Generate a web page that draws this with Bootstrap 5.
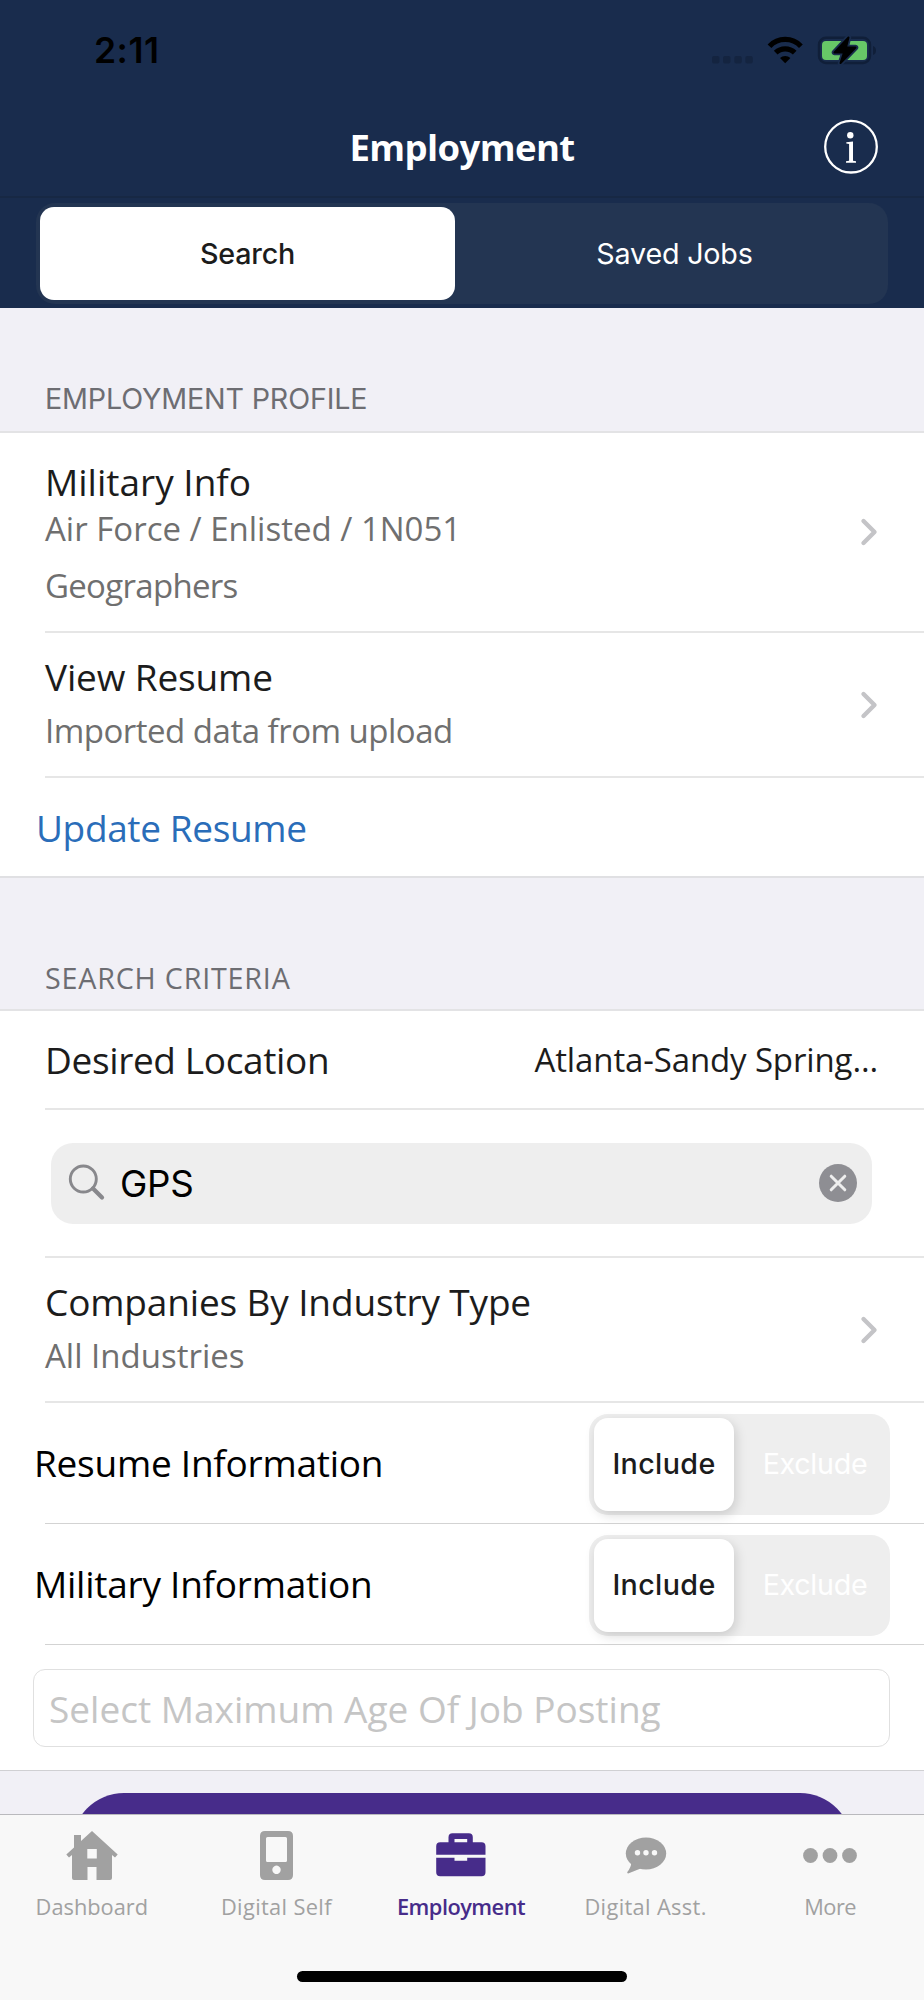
<!DOCTYPE html>
<html lang="en">
<head>
<meta charset="utf-8">
<meta name="viewport" content="width=device-width, initial-scale=1">
<title>Employment</title>
<link href="https://cdn.jsdelivr.net/npm/bootstrap@5.3.0/dist/css/bootstrap.min.css" rel="stylesheet">
<script src="https://cdn.jsdelivr.net/npm/bootstrap@5.3.0/dist/js/bootstrap.bundle.min.js" defer></script>
<style>
  body{width:924px;height:2000px;overflow:hidden;background:#f1f0f6;color:#1c1c1c;font-family:"Open Sans",sans-serif;font-size:37px;line-height:44px;white-space:nowrap}
  .sys{font-family:Inter,"Liberation Sans",sans-serif}
  .top-area{background:#192c4d;height:308px}
  .status-bar{height:100px;padding:28px 47px 0 94px;color:#000}
  .clock{font-size:35.5px;font-weight:600;letter-spacing:.5px;padding-top:1px}
  .title-bar{height:98px;border-bottom:2px solid #172844;color:#fff}
  .title-bar h1{font-size:36.5px;font-weight:700;line-height:46px;letter-spacing:-.6px}
  .info-icon{right:46px;top:19px}
  .seg-top{height:101px;margin:5px 36px 0;padding:4px;border-radius:19px;background:#233552;color:#fff;font-size:28.7px;letter-spacing:-.2px}
  .seg-top .seg-on{width:415px}
  .seg-off{padding-left:10px}
  .seg-on{background:#fff;color:#1c1c1c;border-radius:14px;font-weight:500}
  .section-head{font-size:28.7px;line-height:34px;color:#6d6d72;padding-left:45px;border-bottom:2px solid #e3e3e5}
  .head-profile{height:125px;padding-top:74px;letter-spacing:-.18px}
  .head-search{height:133px;padding-top:83px;letter-spacing:.8px}
  .item{margin-left:45px;border-bottom:2px solid #e6e6e6;padding-right:46px}
  .item.thin{border-bottom:1px solid #d3d3d3}
  .item.last{margin-left:0;border-color:#e0e0e3}
  .item.thin.last{border-color:#d0d0d3}
  .sub{font-size:33px;color:#6f6f6f}
  .chevron{align-self:center}
  .h-military{height:200px;padding-top:27px}
  .h-military .chevron{margin-top:-27px}
  .h-double{height:145px;padding-top:22px}
  .h-double .chevron{margin-top:-22px}
  .h-double .sub{margin-top:10px}
  .h-location{height:99px;letter-spacing:-.36px}
  .h-location .place{font-size:33px;letter-spacing:-.13px;padding-top:1px}
  .h-search{height:148px}
  .h-flag{height:121px;padding-top:2px}
  .h-age{height:126px;padding:24px 0 0 33px}
  .h-update{height:100px;padding-left:36px;padding-top:28px;color:#2a6db9;letter-spacing:-.36px}
  .mt-force{margin-top:3px;letter-spacing:0}
  .mt-geo{margin-top:13px;letter-spacing:-.7px}
  .tight{letter-spacing:-.5px}
  .snug{letter-spacing:-.15px}
  .searchbox{margin-left:6px;width:821px;height:81px;border-radius:22px;background:#eee;padding:0 14px 0 16px;color:#000;font-size:36.7px;letter-spacing:-.3px}
  .searchbox span{margin-left:15px;padding-top:1px}
  .seg{width:301px;height:101px;border-radius:19px;background:#eee;padding:4px 4px 4px 5px;font-size:28.7px;line-height:46px;color:#fff;margin-right:-12px;letter-spacing:-.3px}
  .seg .seg-on{width:140px;height:93px;box-shadow:2px 4px 12px rgba(0,0,0,.15);letter-spacing:.36px}
  .flag-label{color:#000;margin:-2px 0 0 -11px;letter-spacing:-.25px}
  .age{width:857px;height:78px;border:1.5px solid #e0e0e0;border-radius:12px;color:#c5c5c5;padding:1px 0 0 15px}
  .go{height:104px;margin:22px 72px 0;border-radius:52px;background:#472c8a}
  .tabs{height:186px;background:#f8f8f8;border-top:1px solid #b9b9bd;color:#a1a1a1;font-size:21.8px;font-weight:500;line-height:28px}
  .tab-strip{margin-left:-2px}
  .tab{width:184.6px;padding-top:10px}
  .tab svg{height:60px;width:60px;margin-bottom:8px}
  .tab.on{color:#472c8a;font-weight:600;letter-spacing:-.53px}
  .wide{letter-spacing:.35px}
  .home-bar{width:330px;height:11px;border-radius:6px;background:#000;margin-top:50px}
</style>
</head>
<body class="d-flex flex-column">
<header class="top-area flex-shrink-0">
  <div class="status-bar d-flex justify-content-between">
    <span class="clock sys">2:11</span>
    <svg width="166" height="44" viewBox="711 28 166 44">
      <g fill="#142440"><rect x="712" y="56" width="7.500" height="7.500" rx="2"/><rect x="723" y="56" width="7.500" height="7.500" rx="2"/><rect x="734.300" y="56" width="7.500" height="7.500" rx="2"/><rect x="745.300" y="56" width="7.500" height="7.500" rx="2"/></g>
      <g fill="none" stroke="#000" stroke-width="5.200"><path d="M769.500 46.200a21.500 21.500 0 0 1 31.400 0"/><path d="M775.700 52.700a13.500 13.500 0 0 1 19 0"/></g>
      <path d="M785.200 63.200l-5.200-5.200a7.600 7.600 0 0 1 10.400 0z"/>
      <rect x="819" y="37.800" width="51" height="25.200" rx="7" fill="none" stroke="#101f39" stroke-width="2.400"/>
      <path d="M873 46q3 1 3 4.500t-3 4.500z" fill="#101f39"/>
      <rect x="822" y="41" width="45" height="19" rx="4" fill="#67c767"/>
      <path d="M848.500 37.500l-14 15h9.500l-3.500 10.500 15-15.500h-9.500z" stroke="#192c4d" stroke-width="5.500" stroke-linejoin="round"/>
      <path d="M848.500 37.500l-14 15h9.500l-3.500 10.500 15-15.500h-9.500z" stroke="#000" stroke-width="2" stroke-linejoin="round"/>
    </svg>
  </div>
  <div class="title-bar position-relative d-flex justify-content-center">
    <h1 class="m-0 pt-4">Employment</h1>
    <svg class="info-icon position-absolute" width="54" height="56" viewBox="824 119 54 56"><circle cx="851" cy="146.700" r="25.800" fill="none" stroke="#fff" stroke-width="2.300"/><circle cx="850.300" cy="135.300" r="3.200" fill="#fff"/><path d="M846.300 142.200l6.700-.8v19.300l3 .6v1.500h-10v-1.500l3.100-.6v-16.700l-2.800-.5z" fill="#fff"/></svg>
  </div>
  <div class="seg-top sys d-flex">
    <div class="seg-on d-flex align-items-center justify-content-center">Search</div>
    <div class="seg-off flex-fill d-flex align-items-center justify-content-center">Saved Jobs</div>
  </div>
</header>

<main class="flex-fill overflow-hidden">
  <div class="section-head head-profile sys">EMPLOYMENT PROFILE</div>
  <div class="bg-white">
    <div class="item h-military d-flex justify-content-between">
      <div>
        <div>Military Info</div>
        <div class="sub mt-force">Air Force / Enlisted / 1N051</div>
        <div class="sub mt-geo">Geographers</div>
      </div>
      <svg class="chevron" width="18" height="30" viewBox="0 0 18 30"><path d="M3.500 4l11 11-11 11" fill="none" stroke="#c4c4c7" stroke-width="4.400" stroke-linecap="round" stroke-linejoin="round"/></svg>
    </div>
    <div class="item h-double d-flex justify-content-between">
      <div>
        <div class="snug">View Resume</div>
        <div class="sub tight">Imported data from upload</div>
      </div>
      <svg class="chevron" width="18" height="30" viewBox="0 0 18 30"><path d="M3.500 4l11 11-11 11" fill="none" stroke="#c4c4c7" stroke-width="4.400" stroke-linecap="round" stroke-linejoin="round"/></svg>
    </div>
    <div class="item last h-update">Update Resume</div>
  </div>

  <div class="section-head head-search">SEARCH CRITERIA</div>
  <div class="bg-white">
    <div class="item h-location d-flex justify-content-between align-items-center"><span>Desired Location</span><span class="place">Atlanta-Sandy Spring...</span></div>
    <div class="item h-search d-flex align-items-center">
      <div class="searchbox sys d-flex align-items-center">
        <svg width="38" height="38" viewBox="0 0 38 38" fill="none" stroke="#88888c"><circle cx="16.300" cy="15" r="13" stroke-width="2.900"/><path d="M26 24.500l9 9" stroke-width="4.200" stroke-linecap="round"/></svg>
        <span class="flex-fill">GPS</span>
        <svg width="40" height="40" viewBox="0 0 40 40"><circle cx="20" cy="20" r="19" fill="#8e8e93"/><path d="M13.200 13.200l13.600 13.600M26.800 13.200l-13.600 13.600" stroke="#eee" stroke-width="3" stroke-linecap="round"/></svg>
      </div>
    </div>
    <div class="item h-double d-flex justify-content-between">
      <div>
        <div class="snug">Companies By Industry Type</div>
        <div class="sub">All Industries</div>
      </div>
      <svg class="chevron" width="18" height="30" viewBox="0 0 18 30"><path d="M3.500 4l11 11-11 11" fill="none" stroke="#c4c4c7" stroke-width="4.400" stroke-linecap="round" stroke-linejoin="round"/></svg>
    </div>
    <div class="item thin h-flag d-flex justify-content-between align-items-center">
      <span class="flag-label">Resume Information</span>
      <div class="seg sys d-flex"><div class="seg-on d-flex align-items-center justify-content-center">Include</div><div class="seg-off flex-fill d-flex align-items-center justify-content-center">Exclude</div></div>
    </div>
    <div class="item thin h-flag d-flex justify-content-between align-items-center">
      <span class="flag-label">Military Information</span>
      <div class="seg sys d-flex"><div class="seg-on d-flex align-items-center justify-content-center">Include</div><div class="seg-off flex-fill d-flex align-items-center justify-content-center">Exclude</div></div>
    </div>
    <div class="item thin last h-age"><div class="age d-flex align-items-center">Select Maximum Age Of Job Posting</div></div>
  </div>
  <div class="go"></div>
</main>

<nav class="tabs flex-shrink-0">
  <div class="tab-strip d-flex justify-content-center">
    <div class="tab d-flex flex-column align-items-center">
      <svg viewBox="62 1825 60 60" fill="currentColor"><path fill-rule="evenodd" d="M92 1831l25.700 23.500-2.700 3-3-2.500v23q0 2-2 2h-13.500v-13h-9v13h-13.500q-2 0-2-2v-23l-3 2.500-2.700-3 7.700-7v-12.500h7v6zM87.300 1849v9.500h9.500v-9.500z"/></svg>
      Dashboard
    </div>
    <div class="tab d-flex flex-column align-items-center wide">
      <svg viewBox="247 1825 60 60" fill="currentColor"><path fill-rule="evenodd" d="M266 1831h23q5 0 5 5v39q0 5-5 5h-23q-5 0-5-5v-39q0-5 5-5zM268.500 1837q-1.500 0-1.500 1.500v22q0 1.500 1.500 1.500h18q1.500 0 1.500-1.500v-22q0-1.500-1.500-1.500zM277.500 1865.600a4.200 4.200 0 1 0 .01 0z"/></svg>
      Digital Self
    </div>
    <div class="tab on d-flex flex-column align-items-center">
      <svg viewBox="431.500 1825 60 60" fill="currentColor"><path fill-rule="evenodd" d="M436.700 1854.700v-8.400q0-4 4-4h8.300v-5q0-4 4-4h16.300q4 0 4 4v5h8.700q4 0 4 4v8.400zM455 1839v3.300h12.700v-3.300z"/><path d="M436.700 1857.700h18.300v3h12.700v-3h18.300v14.600q0 4-4 4h-41.300q-4 0-4-4z"/></svg>
      Employment
    </div>
    <div class="tab d-flex flex-column align-items-center wide">
      <svg viewBox="615.700 1825 60 60" fill="currentColor"><ellipse cx="645.700" cy="1853.500" rx="20.200" ry="16"/><path d="M631 1862q0 5-4 10-.5 1.800 1.500 1.300l12.500-5z"/><g fill="#f8f8f8"><circle cx="637.200" cy="1852.700" r="2.700"/><circle cx="645.700" cy="1852.700" r="2.700"/><circle cx="654.200" cy="1852.700" r="2.700"/></g></svg>
      Digital Asst.
    </div>
    <div class="tab d-flex flex-column align-items-center tight">
      <svg viewBox="800.500 1825 60 60" fill="currentColor"><circle cx="811" cy="1855.500" r="7.400"/><circle cx="830.500" cy="1855.500" r="7.400"/><circle cx="850" cy="1855.500" r="7.400"/></svg>
      More
    </div>
  </div>
  <div class="home-bar mx-auto"></div>
</nav>
</body>
</html>
